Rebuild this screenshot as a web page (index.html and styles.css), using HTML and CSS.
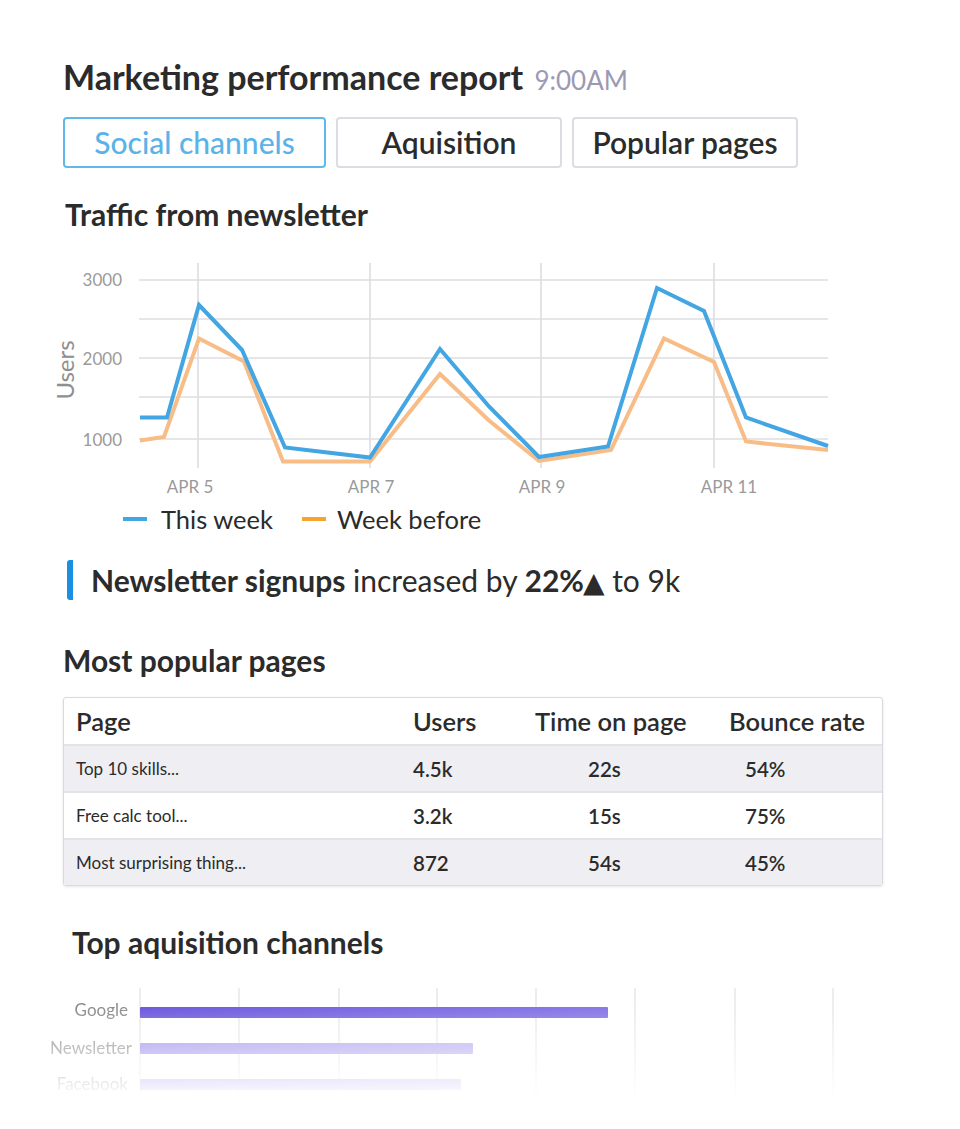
FILE: index.html
```html
<!DOCTYPE html>
<html lang="en">
<head>
    <meta charset="UTF-8">
    <title>Marketing performance report</title>
    <link rel="stylesheet" href="styles.css">
</head>
<body>
    <div class="report">
        <h1 class="title">Marketing performance report <span class="stamp">9:00AM</span></h1>

        <div class="tabs">
            <div class="tab on">Social channels</div>
            <div class="tab">Aquisition</div>
            <div class="tab">Popular pages</div>
        </div>

        <h2 class="heading traffic">Traffic from newsletter</h2>

        <svg class="line-chart" width="800" height="249" viewBox="40 255 800 249">
            <g class="grid">
                <line x1="139" y1="280" x2="828" y2="280"/>
                <line x1="139" y1="319" x2="828" y2="319"/>
                <line x1="139" y1="358" x2="828" y2="358"/>
                <line x1="139" y1="397" x2="828" y2="397"/>
                <line x1="139" y1="439" x2="828" y2="439"/>
                <line x1="198" y1="263" x2="198" y2="468"/>
                <line x1="370" y1="263" x2="370" y2="468"/>
                <line x1="541" y1="263" x2="541" y2="468"/>
                <line x1="714" y1="263" x2="714" y2="468"/>
            </g>
            <g class="axis">
                <text x="122" y="286" text-anchor="end">3000</text>
                <text x="122" y="365" text-anchor="end">2000</text>
                <text x="122" y="446" text-anchor="end">1000</text>
                <text x="190" y="493" text-anchor="middle">APR 5</text>
                <text x="371" y="493" text-anchor="middle">APR 7</text>
                <text x="542" y="493" text-anchor="middle">APR 9</text>
                <text x="729" y="493" text-anchor="middle">APR 11</text>
                <text class="axis-title" x="0" y="0" text-anchor="middle" transform="translate(74 370) rotate(-90)">Users</text>
            </g>
            <polyline class="before" points="140,440.5 164,437 199,338.5 244,361.5 283,461.5 370,461.5 440,374 489,420.5 539,461 611,450 664,338.5 714,362 746,441.5 828,450"/>
            <polyline class="week" points="140,417.5 167,417.5 199,305 242,350 285,447.5 370,457.5 440,349 489,406.5 539,457 608,446.5 657,288 704,311 746,417.5 828,446"/>
        </svg>

        <div class="legend">
            <span class="key"><i class="dash blue"></i>This week</span>
            <span class="key"><i class="dash orange"></i>Week before</span>
        </div>

        <p class="insight"><b>Newsletter signups</b> increased by <b>22%<span class="up">▲</span></b> to 9k</p>

        <h2 class="heading pages">Most popular pages</h2>

        <div class="table">
            <div class="row head">
                <div class="cell">Page</div>
                <div class="cell">Users</div>
                <div class="cell">Time on page</div>
                <div class="cell">Bounce rate</div>
            </div>
            <div class="row grey">
                <div class="cell name">Top 10 skills...</div>
                <div class="cell num">4.5k</div>
                <div class="cell num secs">22s</div>
                <div class="cell num rate">54%</div>
            </div>
            <div class="row">
                <div class="cell name">Free calc tool...</div>
                <div class="cell num">3.2k</div>
                <div class="cell num secs">15s</div>
                <div class="cell num rate">75%</div>
            </div>
            <div class="row grey">
                <div class="cell name">Most surprising thing...</div>
                <div class="cell num">872</div>
                <div class="cell num secs">54s</div>
                <div class="cell num rate">45%</div>
            </div>
        </div>

        <h2 class="heading channels">Top aquisition channels</h2>

        <svg class="bar-chart" width="840" height="149" viewBox="40 980 840 149">
            <defs>
                <linearGradient id="g1" x1="0" x2="1" y1="0" y2="0">
                    <stop offset="0" stop-color="#6a56dc"/>
                    <stop offset="1" stop-color="#8676e6"/>
                </linearGradient>
                <linearGradient id="g2" x1="0" x2="1" y1="0" y2="0">
                    <stop offset="0" stop-color="#9c8cec"/>
                    <stop offset="1" stop-color="#b3a8f0"/>
                </linearGradient>
            </defs>
            <g class="grid light">
                <line x1="140" y1="988" x2="140" y2="1100"/>
                <line x1="239" y1="988" x2="239" y2="1100"/>
                <line x1="339" y1="988" x2="339" y2="1100"/>
                <line x1="437" y1="988" x2="437" y2="1100"/>
                <line x1="536" y1="988" x2="536" y2="1100"/>
                <line x1="635" y1="988" x2="635" y2="1100"/>
                <line x1="735" y1="988" x2="735" y2="1100"/>
                <line x1="833" y1="988" x2="833" y2="1100"/>
            </g>
            <g class="bar-labels">
                <text x="128" y="1016" text-anchor="end">Google</text>
                <text x="132" y="1054" text-anchor="end">Newsletter</text>
                <text x="128" y="1090" text-anchor="end">Facebook</text>
            </g>
            <rect x="140" y="1007" width="468" height="11" rx="1" fill="url(#g1)"/>
            <rect x="140" y="1043" width="333" height="11" rx="1" fill="url(#g2)"/>
            <rect x="140" y="1079" width="321" height="11" rx="1" fill="url(#g2)"/>
        </svg>
    </div>
</body>
</html>
```

FILE: styles.css
```css
*{margin:0;padding:0;box-sizing:border-box;}
body{
    font-family:Lato, "Open Sans", sans-serif;
    color:#2b2b2b;
    background:#fff;
}
.report{
    width:960px;
    padding:57px 0 0 63px;
    overflow:hidden;
}
.title{
    height:40px;
    font-size:34px;
    line-height:40px;
    font-weight:700;
}
.stamp{
    font-size:26px;
    line-height:1;
    font-weight:400;
    color:#9c99b3;
    margin-left:3px;
}
.tabs{
    display:flex;
    gap:10px;
    margin-top:20px;
}
.tab{
    height:51px;
    border:2px solid #dcdce2;
    border-radius:4px;
    font-size:30px;
    line-height:47px;
    font-weight:600;
    text-align:center;
    white-space:nowrap;
}
.tab:nth-child(1){width:263px;}
.tab:nth-child(2){width:226px;}
.tab:nth-child(3){width:226px;}
.tab.on{
    border-color:#62b8ec;
    color:#5ab3e8;
    font-weight:500;
}
.heading{
    font-size:30px;
    line-height:36px;
    font-weight:700;
}
.heading.traffic{
    margin-top:28px;
    padding-left:2px;
}
.line-chart{
    display:block;
    margin:23px 0 0 -23px;
}
.grid line{
    stroke:#dedee2;
    stroke-width:1.6;
}
.grid.light line{
    stroke:#e6e6ea;
    stroke-width:1.4;
}
.axis text{
    font-family:Lato, sans-serif;
    font-size:17px;
    fill:#9a9a9a;
}
.axis .axis-title{
    font-size:24px;
    fill:#8f8f8f;
}
.line-chart polyline{
    fill:none;
    stroke-width:4;
    stroke-linejoin:miter;
}
.week{stroke:#43a5e2;}
.before{stroke:#f8bd86;}
.legend{
    display:flex;
    gap:29px;
    padding-left:60px;
    font-size:25.5px;
    line-height:30px;
}
.key{
    display:flex;
    align-items:center;
}
.dash{
    width:24px;
    height:4px;
    margin-right:14px;
}
.dash.blue{background:#43a5e2;}
.dash.orange{background:#f5a52f;margin-right:11px;}
.insight{
    margin:26px 0 0 4px;
    height:40px;
    padding-left:18px;
    border-left:6px solid #1b8fe2;
    border-radius:3px;
    font-size:30px;
    line-height:40px;
    white-space:nowrap;
}
.insight b{font-weight:700;}
.insight .up{
    font-family:"DejaVu Sans", sans-serif;
    font-size:28px;
    line-height:1;
    margin-left:-1px;
}
.heading.pages{margin-top:42px;}
.table{
    width:820px;
    margin-top:19px;
    border:1px solid #dadade;
    border-radius:3px;
    box-shadow:0 1px 3px rgba(0,0,0,.1);
}
.row{
    display:grid;
    grid-template-columns:337px 122px 194px 1fr;
    height:47px;
    align-items:center;
    border-top:2px solid #e4e4e8;
}
.row.head{
    border-top:0;
    height:46px;
    font-size:25.5px;
    font-weight:600;
}
.row.grey{background:#efeff3;}
.cell{padding-left:12px;}
.cell.name{font-size:17px;}
.cell.num{font-size:20.5px;font-weight:600;}
.cell.secs{padding-left:65px;}
.cell.rate{padding-left:28px;}
.heading.channels{
    margin-top:38px;
    padding-left:9px;
}
.bar-chart{
    display:block;
    margin:20px 0 0 -23px;
    -webkit-mask-image:linear-gradient(to bottom, #000 25px, transparent 120px);
    mask-image:linear-gradient(to bottom, #000 25px, transparent 120px);
}
.bar-labels text{
    font-family:Lato, sans-serif;
    font-size:17px;
    fill:#8a8a8a;
}
```
